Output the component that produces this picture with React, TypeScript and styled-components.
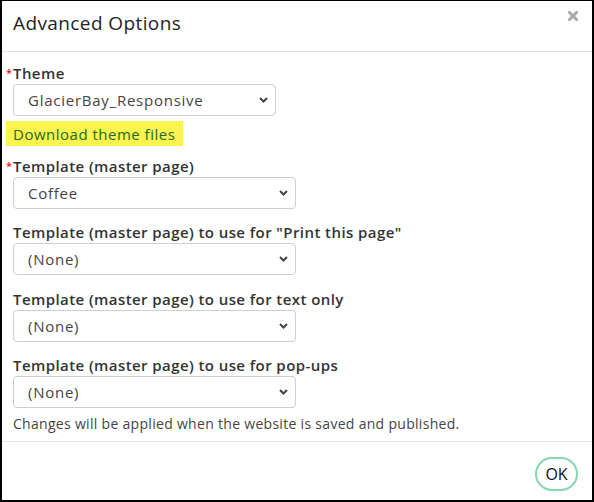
import React from "react";
import styled, { createGlobalStyle } from "styled-components";

const GlobalStyle = createGlobalStyle`
  html, body {
    margin: 0;
    padding: 0;
    background: #ffffff;
  }
  body {
    font-family: "Open Sans", "Noto Sans", Arial, sans-serif;
  }
  * { box-sizing: border-box; }
`;

const Dialog = styled.div`
  width: 594px;
  height: 502px;
  display: flex;
  flex-direction: column;
  background: #fff;
  border-style: solid;
  border-color: #000;
  border-width: 1px 2px 2px 2px;
`;

const Header = styled.div`
  position: relative;
  height: 51px;
  display: flex;
  align-items: center;
  padding: 0 11px;
  border-bottom: 1px solid #e3e3e3;
  flex: none;
`;

const Title = styled.h1`
  margin: -7px 0 0 0;
  font-size: 19px;
  font-weight: 500;
  color: #1f1f1f;
  letter-spacing: 0.4px;
`;

const CloseButton = styled.button`
  position: absolute;
  top: 9px;
  right: 13px;
  width: 12px;
  height: 12px;
  padding: 0;
  border: 0;
  background: transparent;
  display: flex;
  align-items: center;
  justify-content: center;
  cursor: pointer;
`;

const Body = styled.div`
  flex: 1;
  padding: 11px 11px 0 11px;
  display: flex;
  flex-direction: column;
`;

const Field = styled.div<{ $gap?: number }>`
  display: flex;
  flex-direction: column;
  align-items: flex-start;
  margin-bottom: ${(p) => p.$gap ?? 13}px;
`;

const Label = styled.label`
  position: relative;
  font-size: 15px;
  line-height: 20px;
  font-weight: 600;
  color: #333;
  margin-bottom: 1px;
  letter-spacing: 0.42px;
  white-space: nowrap;
`;

const Asterisk = styled.span`
  position: absolute;
  left: -7px;
  top: 0px;
  color: #e0201c;
  font-size: 11px;
  font-weight: 600;
  letter-spacing: 0;
`;

const SelectWrap = styled.div<{ $width: number }>`
  position: relative;
  width: ${(p) => p.$width}px;
  height: 32px;
`;

const Select = styled.select`
  appearance: none;
  -webkit-appearance: none;
  width: 100%;
  height: 100%;
  border: 1px solid #cfcfcf;
  border-radius: 4px;
  background: #fff;
  padding: 0 30px 0 14px;
  font-family: inherit;
  font-size: 15px;
  color: #444;
  letter-spacing: 0.75px;
  outline: none;
`;

const Chevron = styled.svg`
  position: absolute;
  right: 8px;
  top: 13px;
  pointer-events: none;
`;

const Highlight = styled.a`
  display: inline-flex;
  align-items: center;
  height: 25px;
  margin: 5px 0 10px -7px;
  padding: 0 8px 0 7px;
  background: #fbf34e;
  color: #1f6b23;
  font-size: 15px;
  letter-spacing: 0.5px;
  text-decoration: none;
  align-self: flex-start;
`;

const Note = styled.p`
  margin: -2px 0 0 0;
  font-size: 14px;
  line-height: 20px;
  color: #454545;
  letter-spacing: 0.3px;
  white-space: nowrap;
`;

const Footer = styled.div`
  flex: none;
  height: 59px;
  border-top: 1px solid #e3e3e3;
  display: flex;
  align-items: flex-start;
  justify-content: flex-end;
  padding: 15px 14px 0 0;
`;

const OkButton = styled.button`
  width: 43px;
  height: 34px;
  border: 2px solid #86d6b0;
  border-radius: 17px;
  background: #fff;
  font-family: inherit;
  font-size: 16px;
  color: #111;
  padding: 0;
  cursor: pointer;
`;

const ChevronIcon = () => (
  <Chevron width="9" height="6" viewBox="0 0 9 6">
    <path d="M1 1 L4.5 4.5 L8 1" fill="none" stroke="#444" strokeWidth="2" />
  </Chevron>
);

type SelectFieldProps = {
  label: string;
  value: string;
  width: number;
  required?: boolean;
  gap?: number;
  children?: React.ReactNode;
};

const SelectField = ({ label, value, width, required, gap, children }: SelectFieldProps) => (
  <Field $gap={gap}>
    <Label>
      {required && <Asterisk>*</Asterisk>}
      {label}
    </Label>
    <SelectWrap $width={width}>
      <Select defaultValue={value}>
        <option value={value}>{value}</option>
      </Select>
      <ChevronIcon />
    </SelectWrap>
    {children}
  </Field>
);

export default function App() {
  return (
    <>
      <GlobalStyle />
      <Dialog>
        <Header>
          <Title>Advanced Options</Title>
          <CloseButton aria-label="Close">
            <svg width="10" height="10" viewBox="0 0 10 10">
              <path d="M1.5 1.5 L8.5 8.5 M8.5 1.5 L1.5 8.5" stroke="#a8a8a8" strokeWidth="3" strokeLinecap="square" />
            </svg>
          </CloseButton>
        </Header>
        <Body>
          <SelectField label="Theme" value="GlacierBay_Responsive" width={263} required gap={0}>
            <Highlight href="#">Download theme files</Highlight>
          </SelectField>
          <SelectField label="Template (master page)" value="Coffee" width={283} required />
          <SelectField
            label={'Template (master page) to use for "Print this page"'}
            value="(None)"
            width={283}
            gap={14}
          />
          <SelectField label="Template (master page) to use for text only" value="(None)" width={283} />
          <SelectField label="Template (master page) to use for pop-ups" value="(None)" width={283} gap={8} />
          <Note>Changes will be applied when the website is saved and published.</Note>
        </Body>
        <Footer>
          <OkButton>OK</OkButton>
        </Footer>
      </Dialog>
    </>
  );
}
